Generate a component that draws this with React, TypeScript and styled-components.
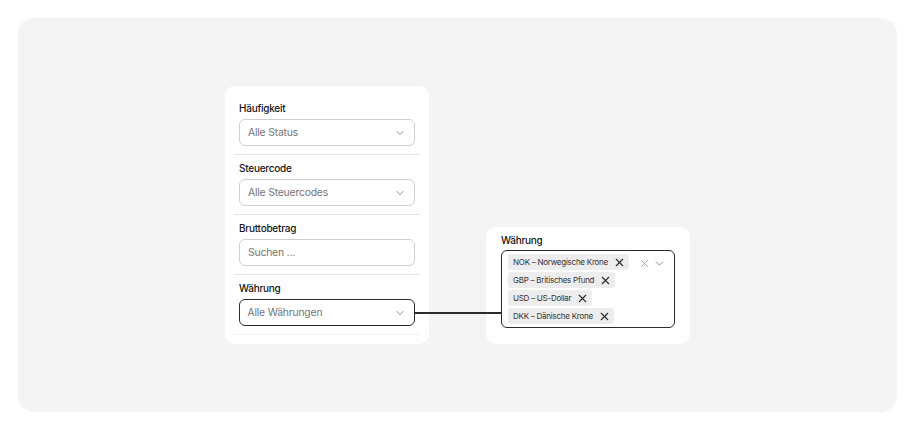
import styled, { createGlobalStyle } from "styled-components";
import { ChevronDown, X } from "lucide-react";

const GlobalStyle = createGlobalStyle`
    body {
        margin: 0;
        background: #ffffff;
        font-family: Inter, "Noto Sans", sans-serif;
        color: #1f1f1f;
    }
`;

const fields = [
    { label: "Häufigkeit", placeholder: "Alle Status", select: true },
    { label: "Steuercode", placeholder: "Alle Steuercodes", select: true },
    { label: "Bruttobetrag", placeholder: "Suchen ...", select: false },
    { label: "Währung", placeholder: "Alle Währungen", select: true, active: true },
];

const currencies = ["NOK – Norwegische Krone", "GBP – Britisches Pfund", "USD – US-Dollar", "DKK – Dänische Krone"];

const App = () => {
    return (
        <>
            <GlobalStyle />
            <Canvas>
                <Row>
                    <FilterCard>
                        {fields.map((field) => (
                            <Section key={field.label}>
                                <Label>{field.label}</Label>
                                <Field $active={field.active}>
                                    <Placeholder>{field.placeholder}</Placeholder>
                                    {field.select && <ChevronDown size={12} strokeWidth={1.5} color="#6b6b6b" />}
                                </Field>
                            </Section>
                        ))}
                    </FilterCard>
                    <DetailCard>
                        <Label>Währung</Label>
                        <MultiSelect>
                            <Chips>
                                {currencies.map((c) => (
                                    <Chip key={c}>
                                        {c}
                                        <X size={13} strokeWidth={2.1} color="#2a2a2a" />
                                    </Chip>
                                ))}
                            </Chips>
                            <Controls>
                                <X size={13} strokeWidth={1.3} color="#8a8a8a" />
                                <ChevronDown size={13} strokeWidth={1.4} color="#6b6b6b" />
                            </Controls>
                        </MultiSelect>
                    </DetailCard>
                    <Connector />
                </Row>
            </Canvas>
        </>
    );
};

const Canvas = styled.div`
    margin: 18px;
    width: 879px;
    height: 394px;
    border-radius: 16px;
    background: #f4f4f4;
    display: flex;
    align-items: center;
    justify-content: center;
`;

const Row = styled.div`
    position: relative;
    display: flex;
    align-items: flex-end;
    gap: 57px;
`;

const FilterCard = styled.div`
    width: 204px;
    box-sizing: border-box;
    background: #ffffff;
    border-radius: 10px;
    padding: 9px 9px 9px;
    display: flex;
    flex-direction: column;
`;

const Section = styled.div`
    padding: 5px 5px 8px;
    border-bottom: 1px solid #e4e4e4;
    display: flex;
    flex-direction: column;
    gap: 3px;

    &:last-child {
        border-bottom-color: #f1f1f1;
    }
`;

const Label = styled.div`
    font-size: 10px;
    line-height: 16px;
    font-weight: 500;
    letter-spacing: -0.25px;
    color: #161616;
`;

const Field = styled.div<{ $active?: boolean }>`
    height: 27px;
    box-sizing: border-box;
    border: ${(p) => (p.$active ? "1.5px solid #2b2b2b" : "1px solid #cfcfcf")};
    border-radius: 6px;
    padding: 0 8px 0 ${(p) => (p.$active ? "7.5px" : "8px")};
    display: flex;
    align-items: center;
    justify-content: space-between;
`;

const Placeholder = styled.span`
    font-size: 10.4px;
    letter-spacing: -0.2px;
    color: #747474;
`;

const DetailCard = styled.div`
    width: 204px;
    height: 117px;
    box-sizing: border-box;
    background: #ffffff;
    border-radius: 10px;
    padding: 5px 15px 0;
    display: flex;
    flex-direction: column;
    gap: 2px;
`;

const MultiSelect = styled.div`
    height: 78px;
    box-sizing: border-box;
    border: 1.5px solid #2b2b2b;
    border-radius: 6px;
    padding: 3px 8px 3px 6px;
    display: flex;
    justify-content: space-between;
    align-items: flex-start;
`;

const Chips = styled.div`
    display: flex;
    flex-direction: column;
    align-items: flex-start;
    gap: 2px;
`;

const Chip = styled.div`
    height: 16px;
    background: #ededed;
    border-radius: 3px;
    padding: 0 3px 0 5px;
    display: flex;
    align-items: center;
    gap: 5px;
    font-size: 8px;
    letter-spacing: -0.25px;
    color: #333333;
    white-space: nowrap;
`;

const Controls = styled.div`
    display: flex;
    align-items: center;
    gap: 2px;
    padding-top: 3px;
`;

const Connector = styled.div`
    position: absolute;
    left: 190px;
    width: 86px;
    top: 226px;
    height: 1.5px;
    background: #2b2b2b;
`;

export default App;
